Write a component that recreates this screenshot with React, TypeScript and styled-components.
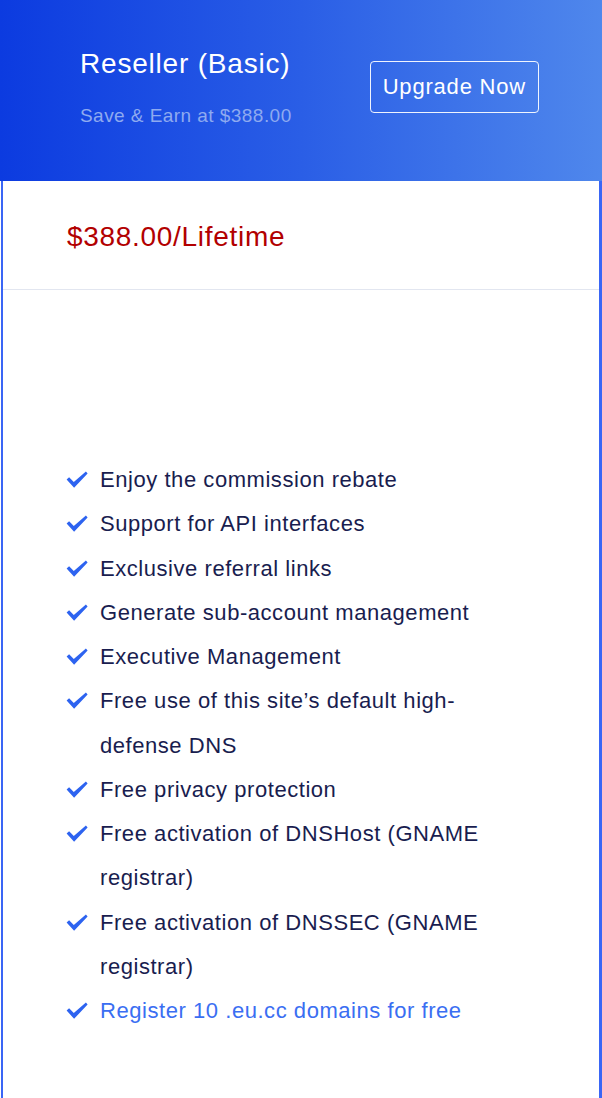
import styled, { createGlobalStyle } from 'styled-components';

const GlobalStyle = createGlobalStyle`
  html, body {
    margin: 0;
    padding: 0;
    background: #fff;
  }
  body {
    font-family: 'Liberation Sans', Arial, sans-serif;
  }
`;

const Page = styled.div`
  width: 602px;
  min-height: 1098px;
  display: flex;
  flex-direction: column;
`;

const Header = styled.header`
  height: 181px;
  box-sizing: border-box;
  padding: 46px 63px 0 80px;
  background: linear-gradient(90deg, #0c3be0 0%, #2a5ee6 50%, #4f87ec 100%);
  display: flex;
  align-items: flex-start;
  justify-content: space-between;
`;

const TitleBlock = styled.div`
  display: flex;
  flex-direction: column;
`;

const Title = styled.h2`
  margin: 0;
  font-size: 28px;
  line-height: 36px;
  font-weight: 400;
  letter-spacing: 0.8px;
  color: #fff;
`;

const Subtitle = styled.p`
  margin: 20px 0 0;
  font-size: 19px;
  line-height: 28px;
  letter-spacing: 0.45px;
  color: #8eaaf0;
`;

const UpgradeButton = styled.button`
  margin-top: 15px;
  height: 52px;
  padding: 0 12px;
  background: transparent;
  border: 1px solid rgba(255, 255, 255, 0.92);
  border-radius: 4px;
  color: #fff;
  font-family: 'Liberation Sans', Arial, sans-serif;
  font-size: 22px;
  letter-spacing: 0.8px;
  cursor: pointer;
`;

const Body = styled.div`
  flex: 1;
  margin-left: 1px;
  border-left: 2px solid #3a66f5;
  border-right: 3px solid #3a66f5;
  background: #fff;
`;

const PriceRow = styled.div`
  height: 109px;
  box-sizing: border-box;
  padding: 3px 0 0 64px;
  display: flex;
  align-items: center;
  border-bottom: 1px solid #e2e6f0;
`;

const Price = styled.span`
  font-size: 28px;
  letter-spacing: 0.7px;
  color: #b20000;
`;

const FeatureList = styled.ul`
  list-style: none;
  margin: 0;
  padding: 168px 0 60px 63px;
  width: 430px;
  display: flex;
  flex-direction: column;
`;

const Feature = styled.li<{ $highlight?: boolean }>`
  display: flex;
  align-items: flex-start;
  gap: 12px;
  font-size: 22px;
  line-height: 44.25px;
  letter-spacing: 0.55px;
  color: ${(p) => (p.$highlight ? '#3a6ef2' : '#191d4f')};
`;

const CheckWrap = styled.span`
  flex: none;
  width: 22px;
  height: 44px;
  display: flex;
  align-items: center;
  justify-content: center;
`;

const FeatureText = styled.span`
  flex: 1;
`;

const Check = () => (
  <svg width="22" height="18" viewBox="0 0 22 18">
    <path d="M0.6 8.6 L3.1 6.2 L7.8 10.9 L19.9 0.6 L21.6 2.4 L8.1 16.8 Z" fill="#2d63f0" />
  </svg>
);

const features = [
  'Enjoy the commission rebate',
  'Support for API interfaces',
  'Exclusive referral links',
  'Generate sub-account management',
  'Executive Management',
  'Free use of this site\u2019s default high-defense DNS',
  'Free privacy protection',
  'Free activation of DNSHost (GNAME registrar)',
  'Free activation of DNSSEC (GNAME registrar)',
];

export default function App() {
  return (
    <>
      <GlobalStyle />
      <Page>
        <Header>
          <TitleBlock>
            <Title>Reseller (Basic)</Title>
            <Subtitle>Save &amp; Earn at $388.00</Subtitle>
          </TitleBlock>
          <UpgradeButton>Upgrade Now</UpgradeButton>
        </Header>
        <Body>
          <PriceRow>
            <Price>$388.00/Lifetime</Price>
          </PriceRow>
          <FeatureList>
            {features.map((f) => (
              <Feature key={f}>
                <CheckWrap>
                  <Check />
                </CheckWrap>
                <FeatureText>{f}</FeatureText>
              </Feature>
            ))}
            <Feature $highlight>
              <CheckWrap>
                <Check />
              </CheckWrap>
              <FeatureText>Register 10 .eu.cc domains for free</FeatureText>
            </Feature>
          </FeatureList>
        </Body>
      </Page>
    </>
  );
}
